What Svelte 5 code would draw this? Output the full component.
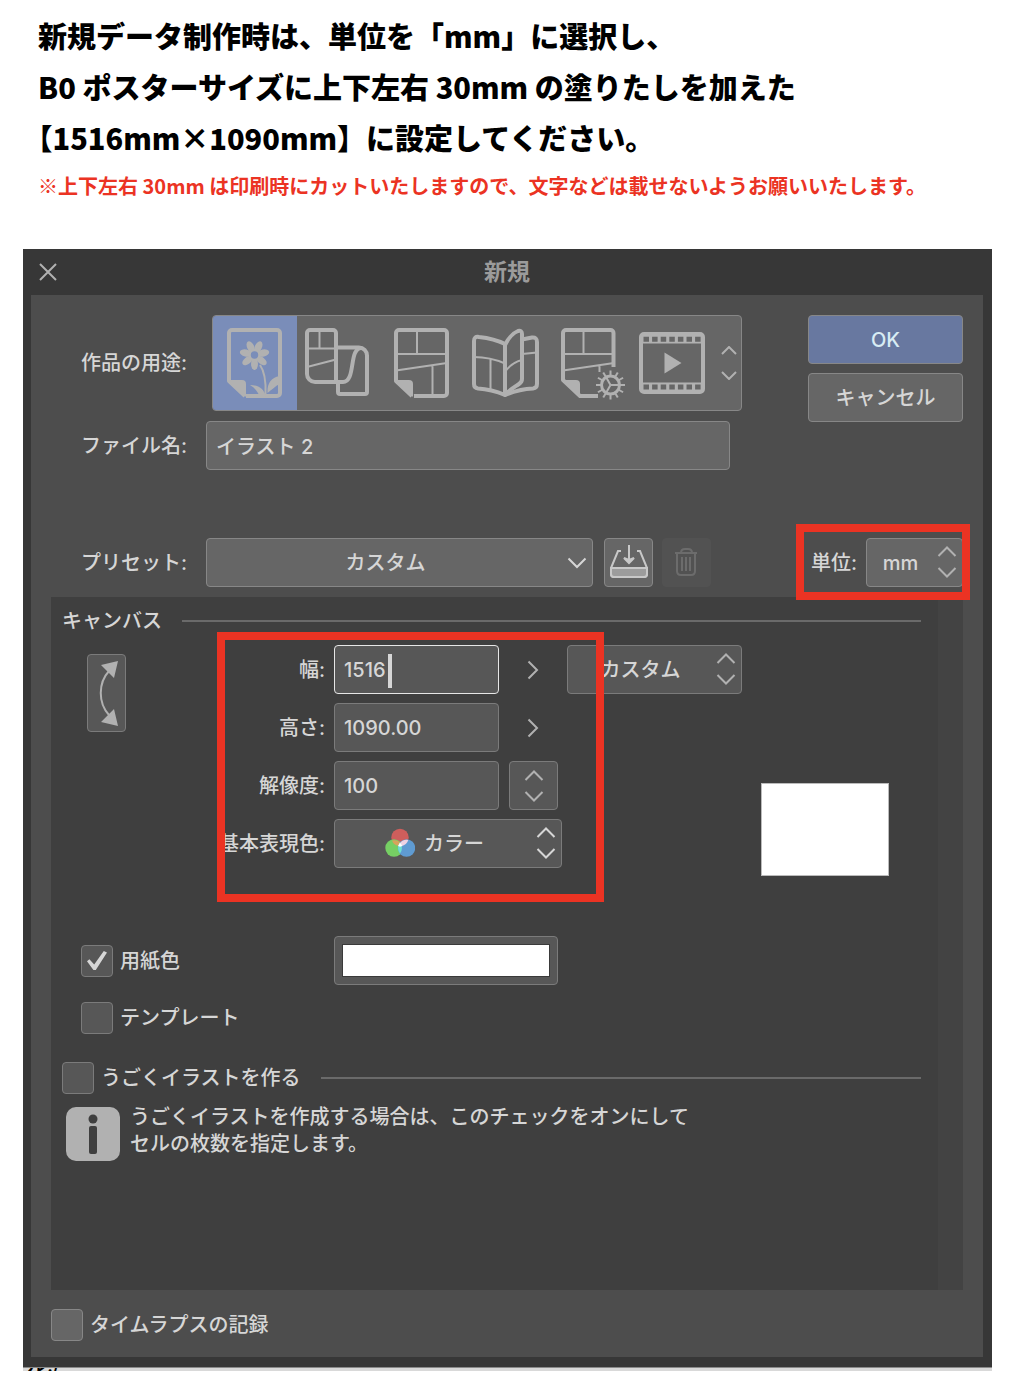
<script lang="ts">
  let purpose = $state('illust');
  let fileName = $state('イラスト 2');
  let width = $state('1516');
  let height = $state('1090.00');
  let resolution = $state('100');
  let paperColor = $state('#ffffff');
  let usePaper = $state(true);
  let useTemplate = $state(false);
  let useAnimation = $state(false);
  let useTimelapse = $state(false);

  const purposes = [
    { id: 'illust', label: 'イラスト' },
    { id: 'webtoon', label: 'Webtoon' },
    { id: 'comic', label: 'コミック' },
    { id: 'book', label: '同人誌入稿' },
    { id: 'all', label: 'すべてのコミック設定' },
    { id: 'movie', label: 'アニメーション' }
  ];

  const petals = [0, 1, 2, 3, 4, 5, 6];
  const teeth = [0, 1, 2, 3, 4, 5, 6, 7, 8, 9, 10, 11];
</script>

{#snippet chevrons()}
  <svg class="chevrons" viewBox="0 0 20 32" width="20" height="32" aria-hidden="true">
    <path d="M1.500 10 10 1.500l8.500 8.500M1.500 22l8.500 8.500 8.500-8.500" />
  </svg>
{/snippet}

<main class="page">
  <header class="notice">
    <h1>
      <span>新規データ制作時は、単位を「mm」に選択し、</span>
      <span>B0 ポスターサイズに上下左右 30mm の塗りたしを加えた</span>
      <span>【1516mm×1090mm】に設定してください。</span>
    </h1>
    <p>※上下左右 30mm は印刷時にカットいたしますので、文字などは載せないようお願いいたします。</p>
  </header>

  <section class="dialog" aria-labelledby="dialog-title">
    <div class="titlebar">
      <button class="close" aria-label="閉じる">
        <svg viewBox="0 0 18 18" width="18" height="18"><path d="M1 1l16 16M17 1 1 17" /></svg>
      </button>
      <h2 id="dialog-title">新規</h2>
    </div>

    <div class="body">
      <div class="top">
        <div class="form">
          <div class="row">
            <span class="label">作品の用途:</span>
            <div class="chooser">
              {#each purposes as item}
                <button
                  class="purpose"
                  class:selected={purpose === item.id}
                  aria-label={item.label}
                  aria-pressed={purpose === item.id}
                  onclick={() => (purpose = item.id)}
                >
                  <svg viewBox="1 1 84 94" width="84" height="94">
                    {#if item.id === 'illust'}
                      <path class="thick" d="M34 81h31a3 3 0 0 0 3-3V18a3 3 0 0 0-3-3H20a3 3 0 0 0-3 3v48l16 15" />
                      <path class="solid" d="M17 65h13q4 0 4 4v13z" />
                      {#each petals as n}
                        <ellipse class="solid" cx="51.500" cy="40" rx="6" ry="3.500" transform="rotate({90 + (n * 360) / 7} 42.500 40)" />
                      {/each}
                      <circle class="solid" cx="42.500" cy="40" r="6" />
                      <circle class="hole" cx="42.500" cy="40" r="3.700" />
                      <path class="thin" d="M48 50c5 7 6 17 5.500 29" />
                      <path class="solid" d="M38 70c8 0 14 3 16 12H48c-2-5-5-9-10-12zM55.500 78c-.5-9 3-15 12-17v8c-4 2-8 6-12 9z" />
                    {:else if item.id === 'webtoon'}
                      <path class="thick" d="M40 67V18a3 3 0 0 0-3-3H14a3 3 0 0 0-3 3v41a8 8 0 0 0 8 8h28c10 0 8-20 12-29 1.500-3 3.500-5 6-5" />
                      <path class="thick" d="M40 32.500h23a8 8 0 0 1 8 8V77a2 2 0 0 1-2 2H44a2 2 0 0 1-2-2V67" />
                      <path class="thin" d="M11 33.500h29M23.500 15v18M11 52l29-7.500" />
                    {:else if item.id === 'comic'}
                      <path class="thick" d="M34 81h30a3 3 0 0 0 3-3V18a3 3 0 0 0-3-3H19a3 3 0 0 0-3 3v48l16 15" />
                      <path class="solid" d="M16 65h13q4 0 4 4v13z" />
                      <path class="thin" d="M16 39h51M37 15v24M16 55.500 67 48M52.500 50v31" />
                    {:else if item.id === 'book'}
                      <path class="thick" d="M41 29c-8-4-17-6-26-7q-5-1-5 4v43q0 4 4 4.500C24 74 34 77 41 80c7-3 18-6 28-6.500q4-.5 4-4.500V27q0-5-5-4.500L58 24.500" />
                      <path class="thick" d="M41 80V30c3-6 8-12 13-14q4-1 4 3v45q0 3-3 5c-6 4-10 6-14 11z" />
                      <path class="thin" d="M10 42c12 0 23 3 31 6.500M26.500 44v31M41 57c4-6 9-10 17-12M58 39l15-1.500" />
                    {:else if item.id === 'all'}
                      <path class="thick" d="M50 81H32L15 65V18a3 3 0 0 1 3-3h44.500a3 3 0 0 1 3 3v34" />
                      <path class="solid" d="M15 65h13q4 0 4 4v13z" />
                      <path class="thin" d="M15 39h51M35.500 15v24M15 55.500 66 48M51.500 50v7" />
                      <circle class="gear" cx="62.500" cy="70" r="9" />
                      {#each teeth as n}
                        <path class="tooth" d="M72 70h5" transform="rotate({n * 30} 62.500 70)" />
                      {/each}
                      <path class="thin" d="M62.500 70h9M62.500 70l-4.500-8M62.500 70l-4.500 8" />
                    {:else}
                      <rect class="thick" x="9" y="19" width="62" height="58" rx="3" />
                      <path class="solid" d="M9 19h62v9.500H9zM9 67.500h62V77H9z" />
                      <path class="perforation" d="M11.500 24.300h58M11.500 72h58" />
                      <path class="solid" d="M32.500 37.500 49.500 48l-17 10.500z" />
                    {/if}
                  </svg>
                </button>
              {/each}
              <button class="scroll" aria-label="用途を切り替え">
                <svg viewBox="0 0 16 34" width="16" height="34"><path d="M1 8l7-7 7 7M1 26l7 7 7-7" /></svg>
              </button>
            </div>
          </div>
          <div class="row">
            <label class="label" for="file-name">ファイル名:</label>
            <input id="file-name" class="field file" type="text" bind:value={fileName} />
          </div>
        </div>
        <div class="actions">
          <button class="field ok">OK</button>
          <button class="field">キャンセル</button>
        </div>
      </div>

      <div class="row preset">
        <label class="label" for="preset">プリセット:</label>
        <div class="select preset-select">
          <select id="preset" class="field"><option>カスタム</option></select>
          <svg class="arrow" viewBox="0 0 20 12" width="20" height="12"><path d="M1.500 1.500 10 10l8.500-8.500" /></svg>
        </div>
        <button class="field icon-button" aria-label="プリセットに登録">
          <svg viewBox="0 0 48 48" width="48" height="48">
            <path d="M16 12h-3L6 29v6q0 3 3 3h30q3 0 3-3v-6L35 12h-3" />
            <path class="tray" d="M6 29h36v6q0 3-3 3H9q-3 0-3-3z" />
            <path d="M24 6v16" />
            <path class="head" d="M19 19l5 5 5-5-5 2z" />
          </svg>
        </button>
        <button class="field icon-button trash" aria-label="プリセットを削除" disabled>
          <svg viewBox="0 0 48 48" width="48" height="48">
            <path d="M12 14h22M18 14q0-4 4-4h3q4 0 4 4M14 14v18q0 4 4 4h10q4 0 4-4V14M19 18v14M23 18v14M27 18v14" />
          </svg>
        </button>
        <div class="unit">
          <label for="unit">単位:</label>
          <div class="select unit-select">
            <select id="unit" class="field"><option>mm</option></select>
            {@render chevrons()}
          </div>
          <div class="highlight unit-highlight"></div>
        </div>
      </div>

      <div class="panel">
        <div class="heading"><h3>キャンバス</h3><hr /></div>

        <div class="canvas">
          <button class="field swap" aria-label="幅と高さを入れ替え">
            <svg viewBox="0 0 38 76" width="38" height="76">
              <path d="M21 16C10 28 10 48 21 60" />
              <path class="head" d="M13 10l17-4-4 17zM13 67l17 4-4-17z" />
            </svg>
          </button>
          <div class="sizes">
            <div class="size">
              <label for="width">幅:</label>
              <div class="caret-box">
                <input id="width" class="field number active" type="text" bind:value={width} />
                <span class="caret"></span>
              </div>
              <button class="more" aria-label="幅の候補">
                <svg viewBox="0 0 12 20" width="12" height="20"><path d="M1.500 1.500 10 10l-8.500 8.500" /></svg>
              </button>
              <div class="select paper-select">
                <select class="field" aria-label="用紙サイズ"><option>カスタム</option></select>
                {@render chevrons()}
              </div>
            </div>
            <div class="size">
              <label for="height">高さ:</label>
              <input id="height" class="field number" type="text" bind:value={height} />
              <button class="more" aria-label="高さの候補">
                <svg viewBox="0 0 12 20" width="12" height="20"><path d="M1.500 1.500 10 10l-8.500 8.500" /></svg>
              </button>
            </div>
            <div class="size">
              <label for="resolution">解像度:</label>
              <input id="resolution" class="field number" type="text" bind:value={resolution} />
              <button class="field icon-button step" aria-label="解像度の候補">{@render chevrons()}</button>
            </div>
            <div class="size">
              <label for="color-mode">基本表現色:</label>
              <div class="select color-select">
                <select id="color-mode" class="field"><option>カラー</option></select>
                <svg class="rgb" viewBox="0 0 30 30" width="30" height="30" aria-hidden="true">
                  <circle cx="15" cy="9.500" r="8.700" fill="#cf5e5c" />
                  <circle cx="9" cy="20" r="8.700" fill="#76cf64" />
                  <circle cx="21.500" cy="20" r="8.700" fill="#5f9bd2" />
                  <path d="M7 12.500a8.700 8.700 0 0 1 9 3 8.700 8.700 0 0 1-2.500 2.500 8.700 8.700 0 0 1-6.500-5.500z" fill="#d8a35c" />
                  <path d="M23.300 12a8.700 8.700 0 0 0-8.800 4 8.700 8.700 0 0 0 2 2 8.700 8.700 0 0 0 6.800-6z" fill="#f0d3e4" />
                  <path d="M15 14.500a8.700 8.700 0 0 1 0 11 8.700 8.700 0 0 1 0-11z" fill="#6ee0d0" />
                  <path d="M15 14.500l2.500 3.500-2.500.8-2-.8z" fill="#fff" />
                </svg>
                {@render chevrons()}
              </div>
            </div>
          </div>
          <div class="preview"></div>
          <div class="highlight canvas-highlight"></div>
        </div>

        <div class="option paper">
          <input id="use-paper" type="checkbox" bind:checked={usePaper} />
          <label for="use-paper">用紙色</label>
          <input class="field swatch" type="color" aria-label="用紙色を選択" bind:value={paperColor} />
        </div>
        <div class="option template">
          <input id="use-template" type="checkbox" bind:checked={useTemplate} />
          <label for="use-template">テンプレート</label>
        </div>

        <div class="option heading animation">
          <input id="use-animation" type="checkbox" bind:checked={useAnimation} />
          <label for="use-animation">うごくイラストを作る</label>
          <hr />
        </div>
        <div class="info">
          <svg viewBox="0 0 54 54" width="54" height="54" aria-hidden="true">
            <rect width="54" height="54" rx="10" />
            <circle class="cut" cx="27" cy="12" r="4.500" />
            <rect class="cut" x="23" y="19" width="8" height="28" rx="2" />
          </svg>
          <p>うごくイラストを作成する場合は、このチェックをオンにして<br />セルの枚数を指定します。</p>
        </div>
      </div>

      <div class="option timelapse">
        <input id="use-timelapse" type="checkbox" bind:checked={useTimelapse} />
        <label for="use-timelapse">タイムラプスの記録</label>
      </div>
    </div>
  </section>
  <div class="behind"><span>ル:/</span></div>
</main>

<style>
  :global(body) {
    margin: 0;
    background: #fff;
  }

  .page {
    --text: #d6d6d6;
    --icon: #b1b1b1;
    --field: #666;
    --edge: #878787;
    padding: 10px 26px 16px 23px;
    font-family: Inter, 'Noto Sans CJK JP', sans-serif;
    font-size: 20px;
    font-weight: 500;
    line-height: 28px;
    color: var(--text);
  }

  .page *,
  .page *::before {
    box-sizing: border-box;
  }

  .notice {
    padding: 0 0 40px 15px;
    font-family: 'Noto Sans CJK JP', sans-serif;
    text-spacing-trim: trim-start;
  }

  .notice h1 {
    margin: 0;
    font-size: 29px;
    font-weight: 900;
    line-height: 51px;
    color: #000;
  }

  .notice h1 span {
    display: block;
  }

  .notice p {
    margin: 0;
    font-weight: 700;
    line-height: 46px;
    color: #eb3323;
  }

  button,
  input,
  select {
    margin: 0;
    padding: 0;
    border: 0;
    background: none;
    font: inherit;
    color: inherit;
  }

  svg {
    display: block;
    fill: none;
    stroke: var(--icon);
    stroke-width: 2;
  }

  .dialog {
    padding: 0 9px 10px 8px;
    background: #373737;
  }

  .titlebar {
    position: relative;
    display: flex;
    align-items: center;
    justify-content: center;
    height: 46px;
  }

  .titlebar h2 {
    margin: 0;
    font-size: 23px;
    font-weight: 700;
    color: #9b9b9b;
  }

  .close {
    position: absolute;
    left: 8px;
  }

  .body {
    padding: 20px 20px 16px;
    background: #4d4d4d;
  }

  .top {
    display: flex;
    justify-content: space-between;
    gap: 66px;
  }

  .form {
    flex: 1;
    display: flex;
    flex-direction: column;
    gap: 10px;
  }

  .row {
    display: flex;
    align-items: center;
  }

  .label {
    width: 136px;
    margin-right: 19px;
    text-align: right;
    white-space: nowrap;
  }

  .field {
    height: 49px;
    border: 1px solid var(--edge);
    border-radius: 4px;
    background: var(--field);
  }

  input.field {
    padding: 0 9px;
    outline: none;
  }

  .chooser {
    flex: 1;
    display: flex;
    margin-left: 6px;
    border: 1px solid var(--edge);
    border-radius: 4px;
    background: var(--field);
    overflow: hidden;
  }

  .purpose {
    flex: 1;
    display: flex;
    justify-content: center;
  }

  .purpose.selected {
    background: #7a8db9;
  }

  .thick {
    stroke-width: 4;
    stroke-linejoin: round;
  }

  .solid {
    fill: var(--icon);
    stroke: none;
  }

  .hole {
    fill: #7a8db9;
    stroke: none;
  }

  .gear {
    stroke-width: 3;
  }

  .perforation {
    stroke: var(--field);
    stroke-width: 5;
    stroke-dasharray: 5.5 3.1;
  }

  .scroll {
    width: 24px;
    display: flex;
    align-items: center;
    justify-content: center;
  }

  .file {
    flex: 1;
    min-width: 0;
    margin-right: 12px;
  }

  .actions {
    display: flex;
    flex-direction: column;
    gap: 9px;
    width: 156px;
  }

  .ok {
    background: #6878a0;
    color: #d8ecf4;
  }

  .preset {
    margin: 68px 0 10px;
  }

  .select {
    position: relative;
  }

  .select select {
    display: block;
    width: 100%;
    appearance: none;
    text-align-last: center;
    padding-right: 28px;
  }

  .select .chevrons {
    position: absolute;
    top: 8px;
    right: 6px;
    pointer-events: none;
  }

  .arrow {
    position: absolute;
    top: 19px;
    right: 6px;
    stroke: var(--text);
    pointer-events: none;
  }

  .preset-select {
    flex: 1;
    max-width: 387px;
    margin-right: 11px;
  }

  .icon-button {
    width: 49px;
    margin-right: 9px;
    display: flex;
    align-items: center;
    justify-content: center;
  }

  .icon-button svg {
    flex: none;
    stroke: #c8c8c8;
  }

  .icon-button .tray {
    fill: #9c9c9c;
  }

  .icon-button .head {
    fill: #c8c8c8;
  }

  .trash {
    border-color: #525252;
    background: #525252;
  }

  .trash svg {
    stroke: #6c6c6c;
  }

  .unit {
    position: relative;
    display: flex;
    align-items: center;
    gap: 9px;
    margin-left: auto;
  }

  .unit-select {
    width: 97px;
  }

  .highlight {
    position: absolute;
    border: 8px solid #eb3323;
    pointer-events: none;
  }

  .unit-highlight {
    inset: -14px -7px -13px -15px;
  }

  .panel {
    --field: #575757;
    --edge: #7b7b7b;
    padding: 10px 17px 129px 11px;
    border-right: 25px solid #434343;
    background: #3f3f3f;
  }

  .heading {
    display: flex;
    align-items: center;
  }

  .heading h3 {
    margin: 0;
    font-size: 20px;
    font-weight: 500;
  }

  hr {
    flex: 1;
    margin: 0 0 0 20px;
    border: 0;
    border-top: 2px solid #6a6a6a;
  }

  .canvas {
    position: relative;
    display: flex;
    align-items: flex-start;
    margin: 10px 0 0 25px;
  }

  .swap {
    width: 39px;
    height: 78px;
    margin-top: 9px;
  }

  .swap .head {
    fill: var(--icon);
    stroke: none;
  }

  .sizes {
    display: flex;
    flex-direction: column;
    gap: 9px;
  }

  .size {
    display: flex;
    align-items: center;
  }

  .size > label {
    width: 199px;
    margin-right: 9px;
    text-align: right;
    white-space: nowrap;
  }

  .number {
    display: block;
    width: 165px;
  }

  .number.active {
    border-color: #e6e6e6;
  }

  .caret-box {
    position: relative;
  }

  .caret {
    position: absolute;
    top: 9px;
    left: 54px;
    width: 4px;
    height: 34px;
    background: var(--text);
  }

  .more {
    width: 68px;
    display: flex;
    justify-content: center;
  }

  .step {
    margin-left: 10px;
  }

  .step .chevrons {
    stroke: var(--icon);
  }

  .paper-select {
    width: 175px;
  }

  .color-select {
    width: 228px;
  }

  .color-select select {
    padding-right: 0;
    padding-left: 12px;
  }

  .color-select .chevrons {
    stroke: var(--text);
  }

  .rgb {
    position: absolute;
    top: 9px;
    left: 51px;
    stroke: none;
    pointer-events: none;
  }

  .preview {
    width: 128px;
    height: 93px;
    margin: 138px 32px 0 auto;
    border: 1px solid #bbb;
    background: #fff;
  }

  .canvas-highlight {
    top: -13px;
    left: 130px;
    width: 387px;
    height: 270px;
  }

  .option {
    display: flex;
    align-items: center;
  }

  .option input[type='checkbox'] {
    appearance: none;
    display: grid;
    place-items: center;
    width: 32px;
    height: 32px;
    margin-right: 7px;
    border: 1px solid var(--edge);
    border-radius: 4px;
    background: var(--field);
  }

  .option input[type='checkbox']:checked::before {
    content: '';
    width: 20px;
    height: 20px;
    background: var(--text);
    clip-path: polygon(0 54%, 12% 44%, 36% 70%, 84% 2%, 100% 10%, 44% 98%, 32% 98%);
  }

  .paper,
  .template {
    margin-left: 19px;
  }

  .paper {
    margin-top: 60px;
  }

  .paper label {
    width: 214px;
  }

  .swatch {
    appearance: none;
    width: 224px;
  }

  input.swatch {
    padding: 7px;
  }

  .swatch::-webkit-color-swatch-wrapper {
    padding: 0;
  }

  .swatch::-webkit-color-swatch {
    border: 1px solid #3a3a3a;
    border-radius: 0;
  }

  .template {
    margin-top: 17px;
  }

  .animation {
    margin-top: 28px;
  }

  .info {
    display: flex;
    gap: 10px;
    margin: 13px 0 0 4px;
  }

  .info svg {
    fill: var(--icon);
    stroke: none;
  }

  .info .cut {
    fill: #3f3f3f;
  }

  .info p {
    margin: -3px 0 0;
    line-height: 27px;
  }

  .timelapse {
    margin-top: 19px;
  }

  /* sliver of the window underneath the dialog */
  .behind {
    height: 4px;
    padding-left: 4px;
    border-top: 1px solid #8a8a8a;
    background: #d9d9d9;
    overflow: hidden;
    color: #000;
  }

  .behind span {
    display: block;
    margin-top: -17px;
  }
</style>
